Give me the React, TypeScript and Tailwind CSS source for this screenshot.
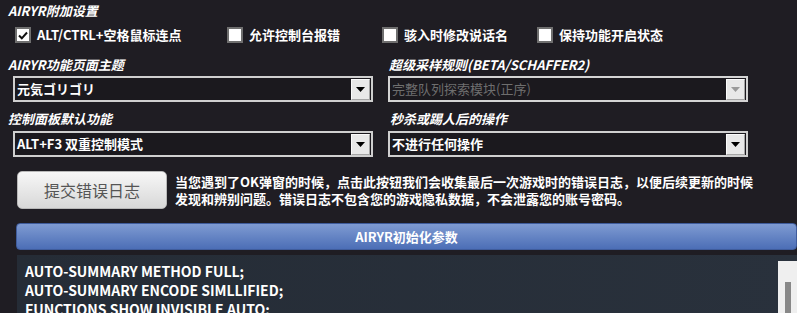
import type { JSX } from 'react'

const FONT = "font-['Noto_Sans_CJK_SC','Noto_Sans',sans-serif]"

function CheckBox({ label, checked, width }: { label: string; checked?: boolean; width: string }): JSX.Element {
  return (
    <div className={`flex items-center ${width}`}>
      <div className="w-4 h-4 border-2 border-[#6f6f6f] bg-white flex items-center justify-center shrink-0">
        {checked && (
          <svg width="10" height="9" viewBox="0 0 10 9">
            <path d="M1 4.5 L3.8 7.3 L9 1.5" stroke="#111" strokeWidth="2" fill="none" />
          </svg>
        )}
      </div>
      <span className="ml-[6px] text-[13px] font-bold leading-4 whitespace-nowrap">{label}</span>
    </div>
  )
}

function Select({ value, disabled }: { value: string; disabled?: boolean }): JSX.Element {
  return (
    <div
      className={`w-[360px] h-[26px] border-2 flex items-center bg-[#1b191e] ${
        disabled ? 'border-[#d4d4d4]' : 'border-[#cfcfcf]'
      }`}
    >
      <span
        className={`flex-1 pl-[2px] text-[13px] leading-5 whitespace-nowrap ${
          disabled ? 'text-[#6e6e6e] font-normal' : 'text-white font-bold'
        }`}
      >
        {value}
      </span>
      <div className="w-[19px] h-[21px] mr-px bg-[#e8e8e8] border border-t-[#fbfbfb] border-l-[#fbfbfb] border-r-[#a5a5a5] border-b-[#a5a5a5] flex items-center justify-center">
        <svg width="9" height="5" viewBox="0 0 9 5">
          <path d="M0 0 H9 L4.5 5 Z" fill={disabled ? '#9a9a9a' : '#000'} />
        </svg>
      </div>
    </div>
  )
}

function Label({ text }: { text: string }): JSX.Element {
  return <div className="h-[22px] text-[13px] font-bold italic leading-[22px] whitespace-nowrap">{text}</div>
}

export default function App(): JSX.Element {
  return (
    <div className={`w-[797px] h-[313px] overflow-hidden bg-[#1f1d23] text-white ${FONT}`}>
      <div className="pl-2 pt-[2px] h-[22px] text-[13px] font-bold italic leading-[18px]">AIRYR附加设置</div>

      <div className="flex pl-[15px] mt-[5px] h-4">
        <CheckBox label="ALT/CTRL+空格鼠标连点" checked width="w-[212px]" />
        <CheckBox label="允许控制台报错" width="w-[155px]" />
        <CheckBox label="骇入时修改说话名" width="w-[155px]" />
        <CheckBox label="保持功能开启状态" width="w-[155px]" />
      </div>

      <div className="grid grid-cols-[380px_409px] pl-2 mt-[11px]">
        <div>
          <Label text="AIRYR功能页面主题" />
          <div className="ml-[5px]">
            <Select value="元気ゴリゴリ" />
          </div>
          <div className="mt-[6px]">
            <Label text="控制面板默认功能" />
          </div>
          <div className="ml-[5px] mt-[1px]">
            <Select value="ALT+F3 双重控制模式" />
          </div>
        </div>
        <div>
          <div className="ml-px">
            <Label text="超级采样规则(BETA/SCHAFFER2)" />
          </div>
          <Select value="完整队列探索模块(正序)" disabled />
          <div className="mt-[6px] ml-[2px]">
            <Label text="秒杀或踢人后的操作" />
          </div>
          <div className="mt-[1px]">
            <Select value="不进行任何操作" />
          </div>
        </div>
      </div>

      <div className="flex items-start pl-[17px] mt-[14px]">
        <button className="w-[150px] h-[38px] rounded-[5px] border border-[#b8b8b8] bg-gradient-to-b from-[#f7f7f7] to-[#d8d8d8] text-[16px] text-[#555] leading-none">
          提交错误日志
        </button>
        <p className="ml-2 mt-[2px] text-[13px] font-bold leading-[17px] whitespace-nowrap">
          当您遇到了OK弹窗的时候，点击此按钮我们会收集最后一次游戏时的错误日志，以便后续更新的时候
          <br />
          发现和辨别问题。错误日志不包含您的游戏隐私数据，不会泄露您的账号密码。
        </p>
      </div>

      <div className="ml-4 mt-[14px] h-[27px] rounded-[4px] border border-[#3f5c9c] bg-gradient-to-b from-[#7f9bd2] to-[#4c6eb6] flex items-center justify-center text-[13px] font-bold">
        AIRYR初始化参数
      </div>

      <div className="ml-[17px] mt-[5px] h-[60px] bg-gradient-to-r from-[#252c36] to-[#29313c] flex">
        <div className="flex-1 pl-2 pt-[7px] text-[14px] font-bold leading-[19px] whitespace-nowrap">
          <div>AUTO-SUMMARY METHOD FULL;</div>
          <div>AUTO-SUMMARY ENCODE SIMLLIFIED;</div>
          <div>FUNCTIONS SHOW INVISIBLE AUTO;</div>
        </div>
        <div className="w-[19px] mt-[6px] bg-[#efefef] flex justify-center">
          <div className="w-[6px] mt-[21px] bg-[#888]" />
        </div>
      </div>
    </div>
  )
}
